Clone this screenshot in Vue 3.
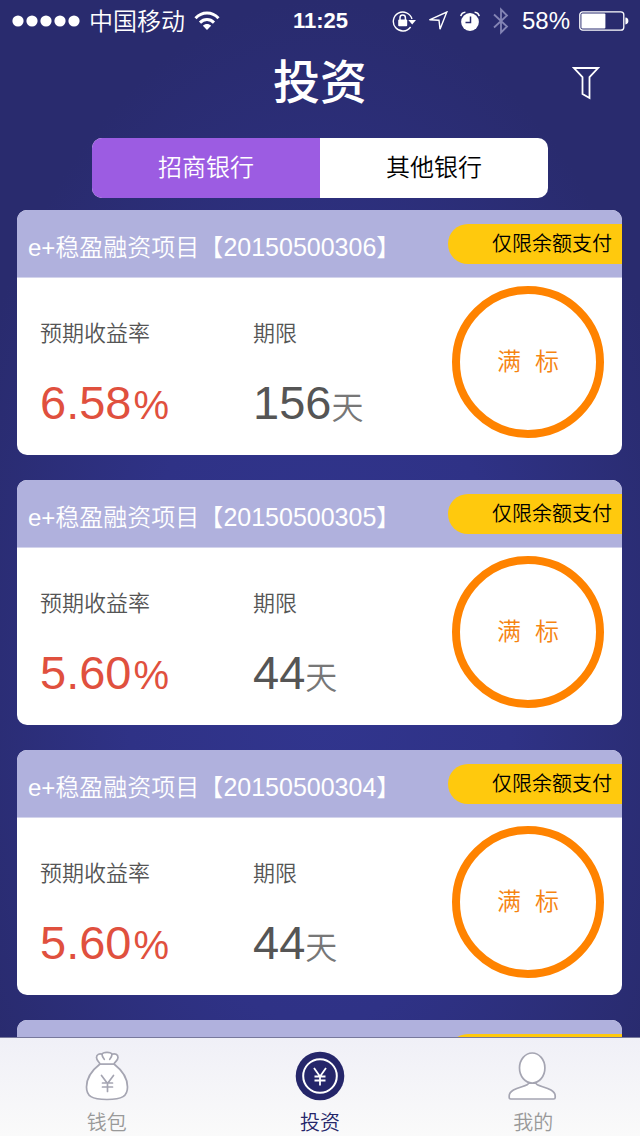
<script setup>
import { ref } from 'vue';

const banks = ['招商银行', '其他银行'];
const bank = ref(banks[0]);

const projects = [
  { id: '20150500306', rate: '6.58', days: 156 },
  { id: '20150500305', rate: '5.60', days: 44 },
  { id: '20150500304', rate: '5.60', days: 44 },
  { id: '20150500303', rate: '5.60', days: 44 },
];
</script>

<template>
  <div class="app">
    <div class="status-bar">
      <div class="status-left">
        <svg width="68" height="12" viewBox="0 0 68 12" fill="#fff">
          <circle v-for="n in 5" :key="n" :cx="n * 14 - 8" cy="6" r="5.6" />
        </svg>
        <span class="carrier">中国移动</span>
        <svg width="26" height="20" viewBox="0 0 26 20" fill="none" stroke="#fff" stroke-width="3">
          <path d="M1.500 7.200C8 .4 18 .4 24.500 7.200" />
          <path d="M6 11.600C10 7.600 16 7.600 20 11.600" />
          <path d="M8.900 14.800C11 12.500 15 12.500 17.100 14.800L13 19z" fill="#fff" stroke="none" />
        </svg>
      </div>
      <span class="time">11:25</span>
      <div class="status-right">
        <svg width="24" height="22" viewBox="0 0 24 22">
          <path d="M18.600 17A9.500 9.500 0 1 1 20 9" fill="none" stroke="#fff" stroke-width="1.400" />
          <path d="M16.300 10h7.700l-3.800 4.600z" fill="#fff" />
          <rect x="6.200" y="9.600" width="9" height="6.600" rx="1" fill="#fff" />
          <path d="M8 10V7.800a2.700 2.700 0 0 1 5.400 0V10" fill="none" stroke="#fff" stroke-width="1.500" />
        </svg>
        <svg width="20" height="20" viewBox="0 0 20 20" fill="none" stroke="#fff" stroke-width="1.400">
          <path d="M1.500 8.800 18.800 1 12 18.200 11 9.200z" />
        </svg>
        <svg width="20" height="20" viewBox="0 0 20 20">
          <circle cx="10" cy="11" r="8.900" fill="#fff" />
          <path d="M.8 5.200Q1.500 1.500 5.400 1.200M19.200 5.200Q18.500 1.500 14.600 1.200" fill="none" stroke="#fff" stroke-width="1.600" />
          <path d="M10.500 5.500v6H5.500" fill="none" stroke="#292b6e" stroke-width="1.500" />
        </svg>
        <svg width="18" height="28" viewBox="0 0 18 28" fill="none" stroke="#8485b5" stroke-width="1.800">
          <path d="M2 7.500 15 19.500 9 25.500V2.500L15 8.500 2 20.500" />
        </svg>
        <div class="battery">
          <span>58%</span>
          <svg width="50" height="20" viewBox="0 0 50 20">
            <rect x=".8" y=".8" width="44" height="18.400" rx="3" fill="none" stroke="#fff" stroke-width="1.300" />
            <rect x="2.400" y="2.600" width="24" height="15" rx="1" fill="#fff" />
            <path d="M46.400 6.600q3 .4 3 3.400t-3 3.400z" fill="#fff" />
          </svg>
        </div>
      </div>
    </div>

    <header class="header">
      <h1>投资</h1>
      <button class="filter" type="button" aria-label="筛选">
        <svg width="28" height="34" viewBox="0 0 28 34" fill="none" stroke="#fff" stroke-width="1.800">
          <path d="M2 2h24l-8.500 9.200V32l-7-4V11.200z" />
        </svg>
      </button>
    </header>

    <div class="segment">
      <button
        v-for="name in banks"
        :key="name"
        type="button"
        :class="{ active: name === bank }"
        :aria-pressed="name === bank"
        @click="bank = name"
      >
        {{ name }}
      </button>
    </div>

    <main class="list">
      <article v-for="project in projects" :key="project.id" class="card">
        <div class="card-head">
          <h2>e+稳盈融资项目【<span class="number">{{ project.id }}</span>】</h2>
          <span class="tag">仅限余额支付</span>
        </div>
        <div class="card-body">
          <div class="field">
            <span class="label">预期收益率</span>
            <span class="value rate">{{ project.rate }}<span class="unit">%</span></span>
          </div>
          <div class="field">
            <span class="label">期限</span>
            <span class="value">{{ project.days }}<span class="unit">天</span></span>
          </div>
          <div class="state"><span>满</span><span>标</span></div>
        </div>
      </article>
    </main>

    <nav class="tab-bar">
      <a href="#wallet">
        <svg width="50" height="50" viewBox="0 0 50 50" fill="#fff" stroke="#a5a5b2" stroke-width="1.700" stroke-linejoin="round" stroke-linecap="round">
          <path d="M18 13C9 20 4.500 28 4.500 36c0 9 5 12.500 20.500 12.500S45.500 45 45.500 36c0-8-4.500-16-13.500-23z" />
          <path d="M18 13c-1-2.500-3.500-3.700-3.500-6.500s3-4.500 5.500-3.200C21 .6 29 .6 30 3.300c3-1.300 6 .4 6 3.200S33 10.500 32 13z" />
          <path d="M20 3.300c0 2.400 1 3.500 2.300 5M30 3.300c0 2.400-1 3.500-2.300 5" fill="none" />
          <path d="M19.500 24.500l6 8 6-8M25.500 32.500v8M20.500 32h10M20.500 36h10" fill="none" />
        </svg>
        <span>钱包</span>
      </a>
      <a href="#invest" class="current">
        <svg width="50" height="50" viewBox="0 0 50 50" fill="none" stroke="#fff">
          <circle cx="25" cy="25" r="24.300" fill="#25266a" stroke="none" />
          <circle cx="25" cy="25" r="16.800" stroke-width="2" />
          <path d="M19 17l6 8.500 6-8.500M25 25v9.500M19.500 25.500h11M19.500 29.500h11" stroke-width="1.800" />
        </svg>
        <span>投资</span>
      </a>
      <a href="#me">
        <svg width="50" height="50" viewBox="0 0 50 50" fill="#fff" stroke="#a5a5b2" stroke-width="1.700" stroke-linejoin="round">
          <path d="M20.500 32.200C20.500 36 1.200 36 1.200 45v1.500q0 1.500 1.500 1.500h43q1.500 0 1.500-1.500V45C47.200 36 28 36 28 32.200z" />
          <ellipse cx="24.200" cy="17" rx="12.700" ry="15" />
        </svg>
        <span>我的</span>
      </a>
    </nav>
  </div>
</template>

<style>
body {
  margin: 0;
}
</style>

<style scoped>
* {
  box-sizing: border-box;
}

.app {
  display: flex;
  flex-direction: column;
  height: 100vh;
  overflow: hidden;
  color: #fff;
  background: radial-gradient(ellipse 60% 60% at 50% 60%, #31358e, #2f3286 50%, #292b6e);
  font-family: 'Liberation Sans', 'Noto Sans CJK SC', sans-serif;
  font-weight: 350;
}

svg {
  display: block;
  flex: none;
}

button {
  padding: 0;
  border: 0;
  background: none;
  font: inherit;
  cursor: pointer;
}

.status-bar {
  display: grid;
  grid-template-columns: 1fr auto 1fr;
  align-items: center;
  height: 40px;
  padding: 0 11px 0 12px;
  font-size: 24px;
  line-height: 40px;
}

.status-left,
.battery {
  display: flex;
  align-items: center;
  gap: 9px;
}

.status-right {
  display: flex;
  align-items: center;
  justify-content: flex-end;
  gap: 12px;
}

.carrier {
  padding-top: 2px;
}

.time {
  font-size: 22px;
  font-weight: 700;
}

.header {
  display: grid;
  grid-template-columns: 1fr auto 1fr;
  align-items: center;
  height: 98px;
  padding: 0 40px 13px;
}

h1 {
  grid-column: 2;
  margin: 0;
  font-size: 47px;
  font-weight: 500;
  line-height: 64px;
}

.filter {
  justify-self: end;
}

.segment {
  display: flex;
  flex: none;
  height: 60px;
  margin: 0 92px;
  border-radius: 10px;
  overflow: hidden;
  background: #fff;
}

.segment button {
  flex: 1;
  color: #000;
  font-size: 24px;
  line-height: 60px;
}

.segment .active {
  color: #fff;
  background: #9c5ce2;
}

.list {
  display: flex;
  flex: 1;
  flex-direction: column;
  gap: 25px;
  min-height: 0;
  padding: 12px 18px 0 17px;
  overflow-y: auto;
  scrollbar-width: none;
}

.card {
  flex: none;
  border-radius: 10px;
  overflow: hidden;
  background: #fff;
}

.card-head {
  display: flex;
  align-items: center;
  justify-content: space-between;
  height: 68px;
  padding-left: 11px;
  border-bottom: 1px solid #d3d4ec;
  background: #b0b1dd;
}

h2 {
  margin: 0;
  padding-top: 8px;
  font-size: 24px;
  font-weight: 350;
  line-height: 36px;
  white-space: nowrap;
}

.number {
  font-size: 25px;
}

.tag {
  padding: 0 10px 0 44px;
  border-radius: 20px 0 0 20px;
  color: #000;
  background: #ffc90d;
  font-size: 20px;
  line-height: 40px;
  white-space: nowrap;
}

.card-body {
  display: grid;
  grid-template-columns: 213px 1fr auto;
  padding: 8px 18px 17px 23px;
}

.field {
  display: flex;
  flex-direction: column;
  gap: 24px;
  padding-top: 33px;
  color: #555;
}

.label {
  font-size: 22px;
  line-height: 30px;
}

.value {
  font-size: 47px;
  line-height: 60px;
}

.rate {
  color: #e0503e;
}

.unit {
  color: #777;
  font-size: 32px;
  line-height: 32px;
}

.rate .unit {
  padding-left: 2px;
  color: inherit;
  font-size: 40px;
}

.state {
  display: flex;
  align-items: center;
  justify-content: center;
  gap: 14px;
  width: 152px;
  height: 152px;
  border: 8px solid #ff8300;
  border-radius: 50%;
  color: #f58412;
  font-size: 24px;
  line-height: 36px;
}

.tab-bar {
  display: flex;
  flex: none;
  height: 99px;
  border-top: 1px solid #77789c;
  background: linear-gradient(#f0f0f7, #fafafa);
}

.tab-bar a {
  display: flex;
  flex: 1;
  flex-direction: column;
  align-items: center;
  gap: 7px;
  padding-top: 13px;
  color: #999;
  font-size: 20px;
  line-height: 30px;
  text-decoration: none;
}

.tab-bar .current {
  color: #25266a;
}
</style>
